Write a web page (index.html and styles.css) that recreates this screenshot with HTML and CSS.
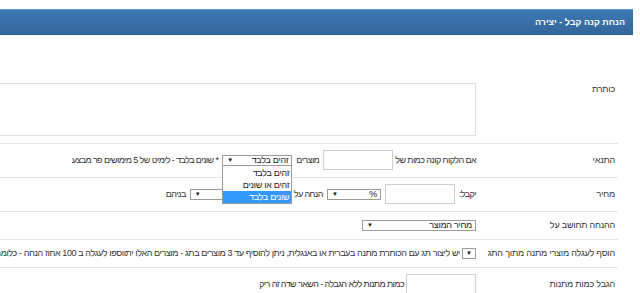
FILE: index.html
```html
<!DOCTYPE html>
<html lang="he" dir="rtl">
<head>
<meta charset="utf-8">
<title>הנחת קנה קבל - יצירה</title>
<link rel="stylesheet" href="styles.css">
</head>
<body>
<div class="page">
  <div class="panel">
    <div class="panel-head">הנחת קנה קבל - יצירה</div>
    <div class="form">
      <div class="row row-top">
        <div class="label label-top">כותרת</div>
        <div class="field"><textarea class="ta"></textarea></div>
      </div>
      <div class="row">
        <div class="label">התנאי</div>
        <div class="field">
          <span class="tx tx-lead">אם הלקוח קונה כמות של</span>
          <input class="inp" type="text">
          <span class="tx">מוצרים</span>
          <div class="sel sel-cond">
            <span>זהים בלבד</span><span class="arr">▼</span>
            <ul class="dd">
              <li>זהים בלבד</li>
              <li>זהים או שונים</li>
              <li class="hl">שונים בלבד</li>
            </ul>
          </div>
          <span class="tx">* שונים בלבד - לימיט של 5 מימושים פר מבצע</span>
        </div>
      </div>
      <div class="row">
        <div class="label">מחיר</div>
        <div class="field">
          <span class="tx">יקבל:</span>
          <input class="inp" type="text">
          <div class="sel sel-pct"><span>%</span><span class="arr">▼</span></div>
          <span class="tx">הנחה על</span>
          <div class="sel sel-on"><span></span><span class="arr">▼</span></div>
          <span class="tx">בניהם</span>
        </div>
      </div>
      <div class="row">
        <div class="label">ההנחה תחושב על</div>
        <div class="field">
          <div class="sel sel-calc"><span>מחיר המוצר</span><span class="arr">▼</span></div>
        </div>
      </div>
      <div class="row">
        <div class="label">הוסף לעגלה מוצרי מתנה מתוך התג</div>
        <div class="field field-tight">
          <div class="sel sel-tag"><span class="arr">▼</span></div>
          <span class="tx tx-long">יש ליצור תג עם הכותרת מתנה בעברית או באנגלית, ניתן להוסיף עד 3 מוצרים בתג - מוצרים האלו יתווספו לעגלה ב 100 אחוז הנחה - כלומר בחינם ללקוח</span>
        </div>
      </div>
      <div class="row">
        <div class="label">הגבל כמות מתנות</div>
        <div class="field field-tight">
          <input class="inp" type="text">
          <span class="tx">כמות מתנות ללא הגבלה - השאר שדה זה ריק</span>
        </div>
      </div>
    </div>
  </div>
</div>
</body>
</html>
```

FILE: styles.css
```css
html, body {
  margin: 0;
  padding: 0;
  background: #fff;
}
body {
  font-family: "Liberation Sans", Arial, sans-serif;
  font-size: 9px;
  letter-spacing: -0.6px;
  color: #333;
  overflow: hidden;
}
.page {
  height: 293px;
  box-sizing: border-box;
  padding: 9px 7px 0 0;
  overflow: hidden;
}
.panel {
  width: 1200px;
}
.panel-head {
  height: 26px;
  box-sizing: border-box;
  border-top: 1px solid #6a9bcc;
  border-bottom: 1px solid #2f5f8f;
  background: linear-gradient(#3c79b3, #34679b);
  color: #fff;
  font-weight: bold;
  font-size: 9px;
  letter-spacing: 0;
  line-height: 24px;
  padding-right: 8px;
}
.form {
  margin-top: 42px;
  margin-right: 15px;
}
.row {
  display: flex;
  align-items: center;
  padding: 6px 0 7px;
  border-bottom: 1px solid #e4e4e4;
}
.row-top {
  align-items: flex-start;
}
.label {
  flex: none;
  width: 139px;
  padding-right: 3px;
  line-height: 14px;
  letter-spacing: -0.2px;
  white-space: nowrap;
}
.label-top {
  line-height: 12px;
}
.field {
  flex: 1;
  display: flex;
  align-items: center;
  gap: 4px;
  white-space: nowrap;
  line-height: 14px;
}
.field-tight {
  gap: 2px;
}
.tx-lead {
  margin-left: -2px;
}
.tx-long {
  letter-spacing: -0.4px;
}
.ta {
  display: block;
  width: 560px;
  height: 53px;
  box-sizing: border-box;
  margin: 0;
  padding: 0;
  border: 1px solid #dedede;
  resize: none;
  background: #fff;
}
.inp {
  flex: none;
  width: 70px;
  height: 20px;
  box-sizing: border-box;
  margin: 0;
  padding: 0;
  border: 1px solid #d0d0d0;
  background: #fff;
  font: inherit;
}
.sel {
  position: relative;
  flex: none;
  height: 11px;
  box-sizing: border-box;
  border: 1px solid #9c9c9c;
  background: #fff;
  display: flex;
  align-items: center;
  justify-content: space-between;
  padding: 0 3px 0 4px;
  line-height: 9px;
  letter-spacing: -0.3px;
  color: #222;
}
.arr {
  font-size: 6px;
  line-height: 6px;
  letter-spacing: 0;
  color: #111;
}
.sel-cond { width: 70px; }
.sel-pct { width: 54px; }
.sel-on { width: 100px; }
.sel-calc { width: 114px; }
.sel-tag { width: 14px; justify-content: center; padding: 0; }
.dd {
  position: absolute;
  top: calc(100% + 1px);
  right: -1px;
  left: -1px;
  margin: 0;
  padding: 1px 0 0;
  list-style: none;
  background: #fff;
  border: 1px solid #9c9c9c;
  border-top: none;
  z-index: 5;
}
.dd li {
  height: 12px;
  line-height: 12px;
  padding-right: 2px;
  color: #222;
}
.dd li.hl {
  background: #3399ff;
  color: #fff;
}
```
